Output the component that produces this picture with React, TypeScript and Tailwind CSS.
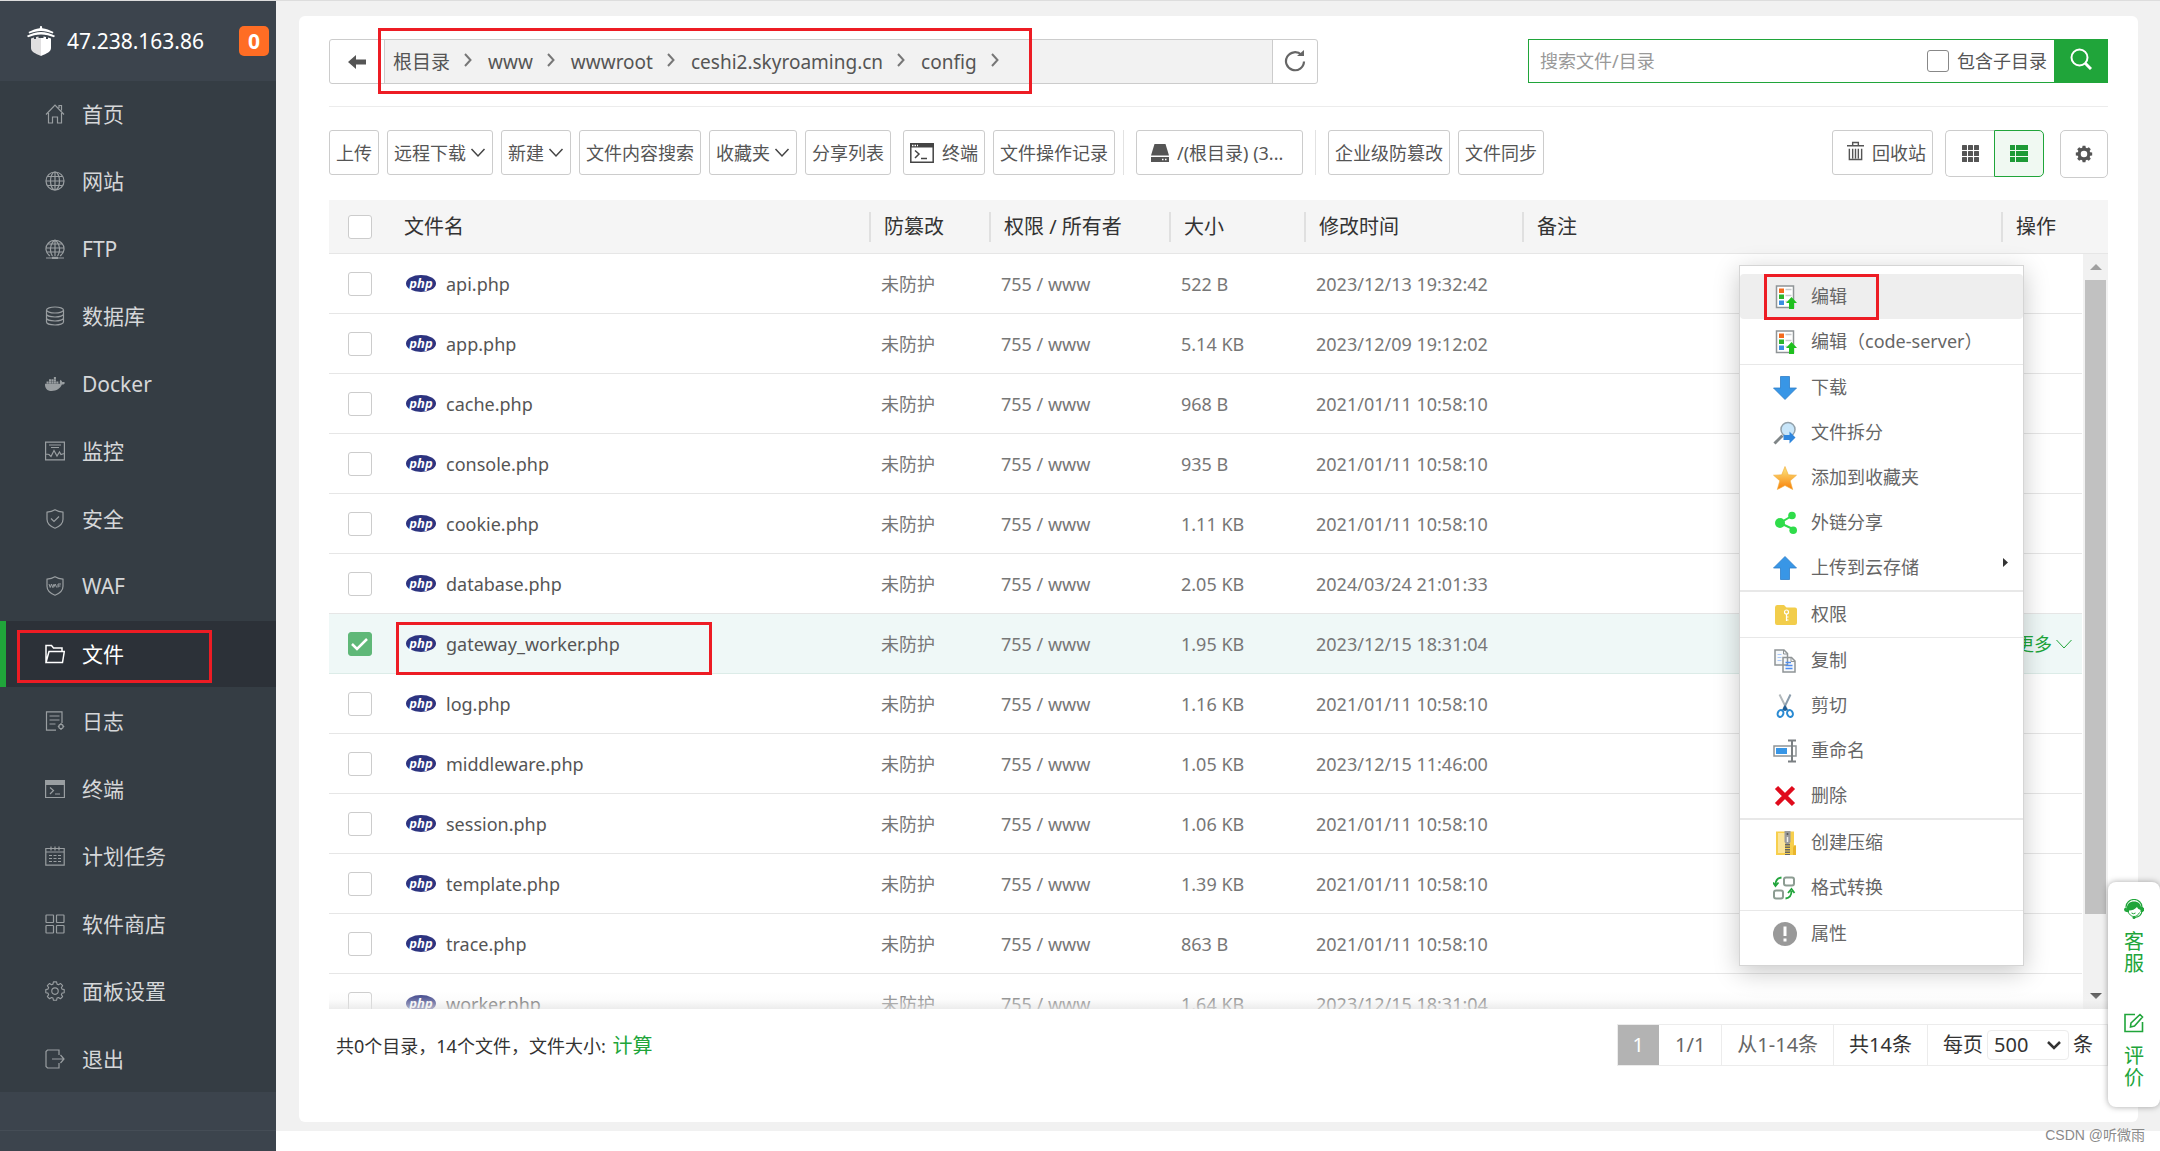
import type { ReactNode } from "react";
import clsx from "clsx";
import { FaDocker } from "react-icons/fa";

const Line = ({ children, className }: { children: ReactNode; className?: string }) => (
  <svg viewBox="0 0 20 20" fill="none" stroke="currentColor" strokeWidth="1.2" className={clsx("size-5 shrink-0", className)}>
    {children}
  </svg>
);

const shield = "M10 .8c2.600 1.600 5 2.200 8 2.400v7c0 4-3 7-8 9-5-2-8-5-8-9v-7c3-.2 5.400-.8 8-2.400z";
const gearPath =
  "M8.300 1h3.400l.5 2.400 1.600.7 2.100-1.400 2.400 2.400-1.400 2.100.7 1.600 2.400.5v3.400l-2.400.5-.7 1.600 1.400 2.100-2.400 2.400-2.100-1.400-1.600.7-.5 2.400H8.300l-.5-2.400-1.600-.7-2.100 1.400-2.400-2.400 1.400-2.100-.7-1.600L0 12.700V9.300l2.400-.5.700-1.600-1.400-2.100 2.400-2.400 2.100 1.400 1.600-.7z";

const nav: { label: string; icon: ReactNode; active?: boolean }[] = [
  { label: "首页", icon: <Line><path d="M1 10.500 10 1l9 9.500M14 4V1.500h2.500v5M3.500 9v10h4v-6h5v6h4V9" /></Line> },
  { label: "网站", icon: <Line><circle cx="10" cy="10" r="9" /><ellipse cx="10" cy="10" rx="4.500" ry="9" /><path d="M10 1v18M1 10h18M2.500 5.500h15M2.500 14.500h15" /></Line> },
  { label: "FTP", icon: <Line><path d="M5 17a9 8.600 0 1 1 10 0M7.500 17c-3-4-3-12 2.500-16 5.500 4 5.500 12 2.500 16M10 1v16M1 9h18M2.500 5h15M2 13h16M1 19h18" /><path d="M7 19h6" strokeWidth="2.500" /></Line> },
  { label: "数据库", icon: <Line><ellipse cx="10" cy="4" rx="8.500" ry="3" /><path d="M1.500 4v12c0 1.700 3.800 3 8.500 3s8.500-1.300 8.500-3V4M1.500 8c0 1.700 3.800 3 8.500 3s8.500-1.300 8.500-3M1.500 12c0 1.700 3.800 3 8.500 3s8.500-1.300 8.500-3" /></Line> },
  { label: "Docker", icon: <FaDocker className="size-5 shrink-0" /> },
  { label: "监控", icon: <Line><path d="M.6 1.200h18.800v17.600H.6zM4 4h12M6 6.500h8M1 13l3 .5 2 2 3-6 3 5.500 2.500-4 1.500 2.500 3-1" /></Line> },
  { label: "安全", icon: <Line><path d={shield} /><path d="m6 9.500 3 3 5-5" /></Line> },
  { label: "WAF", icon: <Line><path d={shield} /><path d="m4 8 1.200 3.500L6.500 8l1.200 3.500L9 8m-.3 3.500L10.200 8l1.500 3.500M13 11.500V8h3M13 10h2.500" strokeWidth="1" /></Line> },
  { label: "文件", icon: <Line className="text-white"><path d="M1 18.500V1.500h5.500l2 2.500H17v3.500M1 18.500 4 7.500h15.300L17.500 18.500z" strokeWidth="1.500" /></Line>, active: true },
  { label: "日志", icon: <Line><path d="M17 12V.8H1.500v18.400H11M4.500 5h10M4.500 9h10M4.500 13h6" /><circle cx="16" cy="15.500" r="2.200" /><path d="M16 12v1.500M16 17.500V19M12.800 15.500h1.500M17.800 15.500h1.500" /></Line> },
  { label: "终端", icon: <Line><path d="M.6 1.500h18.800v17H.6z" /><path d="M.6 4h18.800" strokeWidth="4" /><path d="m5 8.500 3.500 3L5 15M10 15h5" /></Line> },
  { label: "计划任务", icon: <Line><path d="M.8 2.500h18.400v16.700H.8zM.8 6h18.400M6 .5v4M10 .5v4M14 .5v4M4 9.500h3M8.500 9.500h3M13 9.500h3M4 12.500h3M8.500 12.500h3M13 12.500h3M4 15.500h3M8.500 15.500h3M13 15.500h3" /></Line> },
  { label: "软件商店", icon: <Line><rect x="1" y="1" width="7.500" height="7.500" rx=".5" /><rect x="11.500" y="1" width="7.500" height="7.500" rx=".5" /><rect x="1" y="11.500" width="7.500" height="7.500" rx=".5" /><rect x="11.500" y="11.500" width="7.500" height="7.500" rx=".5" /></Line> },
  { label: "面板设置", icon: <Line><g transform="translate(.8 0) scale(.92)"><path d={gearPath} strokeLinejoin="round" /><circle cx="10" cy="11" r="3.500" /></g></Line> },
  { label: "退出", icon: <Line><path d="M14 6V1H2.500L1 2.500V17.500L2.500 19H14v-5M7 10h12M15.500 6l3.500 4-3.500 4" /></Line> },
];

const crumbs = ["根目录", "www", "wwwroot", "ceshi2.skyroaming.cn", "config"];

const files = [
  { name: "api.php", size: "522 B", time: "2023/12/13 19:32:42" },
  { name: "app.php", size: "5.14 KB", time: "2023/12/09 19:12:02" },
  { name: "cache.php", size: "968 B", time: "2021/01/11 10:58:10" },
  { name: "console.php", size: "935 B", time: "2021/01/11 10:58:10" },
  { name: "cookie.php", size: "1.11 KB", time: "2021/01/11 10:58:10" },
  { name: "database.php", size: "2.05 KB", time: "2024/03/24 21:01:33" },
  { name: "gateway_worker.php", size: "1.95 KB", time: "2023/12/15 18:31:04", selected: true },
  { name: "log.php", size: "1.16 KB", time: "2021/01/11 10:58:10" },
  { name: "middleware.php", size: "1.05 KB", time: "2023/12/15 11:46:00" },
  { name: "session.php", size: "1.06 KB", time: "2021/01/11 10:58:10" },
  { name: "template.php", size: "1.39 KB", time: "2021/01/11 10:58:10" },
  { name: "trace.php", size: "863 B", time: "2021/01/11 10:58:10" },
  { name: "worker.php", size: "1.64 KB", time: "2023/12/15 18:31:04" },
];

const Pic = ({ children }: { children: ReactNode }) => (
  <svg viewBox="0 0 24 24" fill="none" className="size-6 shrink-0">
    {children}
  </svg>
);

const EditIcon = () => (
  <Pic>
    <rect x="3.500" y="1" width="17" height="21.500" fill="#fff" stroke="#8f9496" strokeWidth="1.500" />
    <path d="M12.500 4.500h6M12.500 10.500h6M12.500 16.500h3" stroke="#c9cccd" strokeWidth="1.500" />
    <rect x="6" y="3.500" width="5" height="4.500" fill="#f36a1d" />
    <rect x="6" y="9.500" width="5" height="4.500" fill="#2bb52b" />
    <rect x="6" y="15.500" width="5" height="4.500" fill="#3b8ee0" />
    <path d="m18.500 12 5.500 6h-3v6h-5v-6h-3z" fill="#1fc01f" />
  </Pic>
);

const menu: { label: string; icon: ReactNode; hover?: boolean; sub?: boolean }[][] = [
  [
    { label: "编辑", icon: <EditIcon />, hover: true },
    { label: "编辑（code-server）", icon: <EditIcon /> },
  ],
  [
    { label: "下载", icon: <Pic><path d="M7.500.5h9V12h7L12 23.500.5 12h7z" fill="#3896e6" stroke="#2f7fc8" strokeWidth=".8" /></Pic> },
    {
      label: "文件拆分",
      icon: (
        <Pic>
          <path d="m1.500 22.500 8-8" stroke="#7f8587" strokeWidth="3" />
          <circle cx="15" cy="8.500" r="7" fill="#c8e6fa" stroke="#93a1aa" strokeWidth="1.500" />
          <path d="M10.500 14h6v-3.500l6 6-6 6V19h-6z" fill="#2f86dd" />
        </Pic>
      ),
    },
    {
      label: "添加到收藏夹",
      icon: (
        <Pic>
          <defs>
            <linearGradient id="star" x1="0" y1="0" x2="0" y2="1">
              <stop offset="0.200" stopColor="#fbd56a" />
              <stop offset="0.900" stopColor="#f98a14" />
            </linearGradient>
          </defs>
          <path d="m12 .5 3.300 8.300 8.200.4-6.300 5.600 2.500 8.700L12 19.500l-7.700 4 2.500-8.700L.5 9.200l8.200-.4z" fill="url(#star)" stroke="#f0ad3c" strokeWidth=".6" />
        </Pic>
      ),
    },
    {
      label: "外链分享",
      icon: (
        <Pic>
          <path d="M19.500 4.500 7 12l15 7" stroke="#2fdc4a" strokeWidth="2" />
          <g fill="#2fdc4a"><circle cx="7" cy="12" r="5" /><circle cx="19" cy="4.500" r="3.800" /><circle cx="20.200" cy="19.200" r="3.800" /></g>
        </Pic>
      ),
    },
    { label: "上传到云存储", icon: <Pic><path d="M7.500 23.500h9V12h7L12 .5.5 12h7z" fill="#3896e6" stroke="#2f7fc8" strokeWidth=".8" /></Pic>, sub: true },
  ],
  [
    {
      label: "权限",
      icon: (
        <Pic>
          <path d="M2 4.500Q2 2 4 2h7l2.500 2.500H22q2 0 2 2V20q0 2-2 2H4q-2 0-2-2z" fill="#f2cd4b" />
          <g stroke="#fff" strokeWidth="1.200"><circle cx="13.500" cy="9" r="2" /><path d="M13.500 11v7M13.500 14h2M13.500 17h2" /></g>
        </Pic>
      ),
    },
  ],
  [
    {
      label: "复制",
      icon: (
        <Pic>
          <path d="M2 1h9l3.500 3.500V16H2zM10 8.500h8.500L22 12v11H10z" fill="#f7f9fb" stroke="#8f9496" strokeWidth="1.500" />
          <path d="M4.500 5.500h4M4.500 8.500h4M4.500 11.500h4" stroke="#a9c8fa" />
          <path d="M12.500 13.500H18M12.500 16.500h7M12.500 19.500h7" stroke="#4d8df0" strokeWidth="1.500" />
          <path d="M10.500 1v4h4M18 8.500v4h4" stroke="#8f9496" />
        </Pic>
      ),
    },
    {
      label: "剪切",
      icon: (
        <Pic>
          <path d="M6.500.5 14 15.500" stroke="#b4babd" strokeWidth="2" />
          <path d="M17.500.5 10.500 15" stroke="#8a9cab" strokeWidth="2" />
          <path d="m12 11-3 5 3 1 3-1z" fill="#1d5c96" />
          <ellipse cx="7.500" cy="19.500" rx="2.800" ry="3.500" transform="rotate(20 7.500 19.500)" stroke="#2a8ad2" strokeWidth="2" />
          <ellipse cx="17" cy="19.500" rx="2.800" ry="3.500" transform="rotate(-20 17 19.500)" stroke="#2a8ad2" strokeWidth="2" />
        </Pic>
      ),
    },
    {
      label: "重命名",
      icon: (
        <Pic>
          <rect x="1" y="7" width="22" height="10" fill="#fff" stroke="#8f9496" strokeWidth="1.500" />
          <rect x="3" y="9" width="11" height="6" fill="#3896e6" />
          <path d="M15 1.500h8M15 22.500h8M19 1.500v21" stroke="#7a7f82" strokeWidth="2" />
        </Pic>
      ),
    },
    { label: "删除", icon: <Pic><path d="m3.500 3.500 17 17m0-17-17 17" stroke="#e00b1c" strokeWidth="4.500" /></Pic> },
  ],
  [
    {
      label: "创建压缩",
      icon: (
        <Pic>
          <path d="M3 .5h18v14h2V24H3z" fill="#f7cf4d" />
          <path d="M5 2h7v20H5z" fill="#fbe49a" />
          <path d="M21 14.500h2V24h-3v-7z" fill="#e9b52c" />
          <path d="M11.500 0h6v11l-1.500 2h-3l-1.500-2z" fill="#9b9b9b" />
          <circle cx="14.500" cy="3" r="1" fill="#555" />
          <path d="M14.500 6v5" stroke="#eee" strokeWidth="1.500" />
          <path d="M14.500 13v11" stroke="#666" strokeWidth="5" strokeDasharray="1.500 1" />
        </Pic>
      ),
    },
    {
      label: "格式转换",
      icon: (
        <Pic>
          <g transform="translate(-1.500 0)">
            <g stroke="#8c9c92" strokeWidth="2"><rect x="12.500" y="1.500" width="10" height="8" rx="2" /><rect x="2.500" y="14.500" width="9" height="8" rx="2" /></g>
            <path d="M10 1.500C6 2 4 5 4 9M1.500 6.500 4 10l3-3.500M14 22.500c4-.5 6-3.500 6-7.500M16.500 17l3.500-4 3 4" stroke="#22a53c" strokeWidth="1.800" />
          </g>
        </Pic>
      ),
    },
  ],
  [{ label: "属性", icon: <Pic><circle cx="12" cy="12" r="12" fill="#999" /><path d="M12 4.500v9.500M12 16.500v3" stroke="#fff" strokeWidth="3" /></Pic> }],
];

const Mark = ({ className }: { className: string }) => (
  <span className={clsx("pointer-events-none absolute border-3 border-[#ed1c24]", className)} />
);

const Check = ({ label, checked }: { label: string; checked?: boolean }) => (
  <span className="grid size-6">
    <input
      type="checkbox"
      aria-label={label}
      defaultChecked={checked}
      className="peer col-start-1 row-start-1 size-6 appearance-none rounded-[3px] border border-[#ccc] bg-white checked:border-[#5fb878] checked:bg-[#5fb878]"
    />
    <svg viewBox="0 0 24 24" className="pointer-events-none invisible col-start-1 row-start-1 size-6 peer-checked:visible">
      <path d="m4 12 5 5 10-10" fill="none" stroke="#fff" strokeWidth="2.500" />
    </svg>
  </span>
);

const Tool = ({ children, className }: { children: ReactNode; className?: string }) => (
  <button type="button" className={clsx("flex h-[45px] shrink-0 items-center rounded-[3px] border border-[#ccc] bg-white px-1.5 whitespace-nowrap", className)}>
    {children}
  </button>
);

const Down = () => (
  <svg viewBox="0 0 16 10" className="ml-1 h-2.5 w-4" fill="none" stroke="#444" strokeWidth="1.500">
    <path d="m1.500 1 6.500 7 6.500-7" />
  </svg>
);

const Cols = ({ last }: { last: string }) => (
  <colgroup>
    <col className="w-[60px]" />
    <col className="w-[480px]" />
    <col className="w-[120px]" />
    <col className="w-[180px]" />
    <col className="w-[135px]" />
    <col className="w-[218px]" />
    <col />
    <col className={last} />
  </colgroup>
);

const Sidebar = () => (
  <aside className="w-[276px] shrink-0 bg-[#3c444d] text-[#d5d7d9]">
    <div className="flex h-20 items-center pr-[7px] pl-[27px] text-[21px] text-white">
      <svg viewBox="0 0 28 30" className="mr-3 h-[30px] w-7 shrink-0">
        <path d="M13.300 0h1.400l.6 2.200C19 2.800 22.500 4 26.500 6l-.8 1.600C21.500 6 18 5 14 5S6.500 6 2.300 7.600L1.500 6c4-2 7.500-3.200 11.200-3.800z" fill="#fff" />
        <path d="M14 6c4.500 0 9.500 1.500 14 3.800l-1 1.400c-4-1.500-8.500-2.800-13-2.800S5 9.700 1 11.200L0 9.800C4.500 7.500 9.500 6 14 6z" fill="#fff" />
        <path d="M4 12.500l3-1V13h2v-2l2.500-.5v1.500H14v18C8 27.500 4 25.500 4 22z" fill="#e0dfe0" />
        <path d="M24 12.500l-3-1V13h-2v-2l-2.500-.5v1.500H14v18c6-2.500 10-4.500 10-8z" fill="#fff" />
      </svg>
      <span>47.238.163.86</span>
      <span className="ml-auto grid h-[30px] w-[30px] place-items-center rounded-[5px] bg-[#ff6d24] font-bold">0</span>
    </div>
    <nav className="bg-[#353d44] text-[21px]">
      <ul>
        {nav.map((n) => (
          <li key={n.label} className="odd:mb-px even:mb-0.5">
            <a
              href="#"
              className={clsx(
                "relative flex h-[66px] items-center gap-4 border-l-6 pl-[39px]",
                n.active ? "border-[#20a53a] bg-[#2c3138] text-white" : "border-transparent"
              )}
            >
              <span className="text-[#999ea1]">{n.icon}</span>
              <span className="pl-px">{n.label}</span>
              {n.active && <Mark className="top-[9px] left-[11px] h-[53px] w-[195px]" />}
            </a>
          </li>
        ))}
      </ul>
    </nav>
    <div className="h-[38px] border-b border-[#454d56]" />
  </aside>
);

const PathBar = () => (
  <div className="flex items-start justify-between">
    <div className="relative flex h-[45px] w-[989px] rounded-[3px] border border-[#ccc]">
      <button type="button" aria-label="返回" className="grid w-[55px] place-items-center border-r border-[#ccc]">
        <svg viewBox="0 0 18 14" className="h-3.5 w-[18px]" fill="#555"><path d="M0 7l8-7v4.500h10v5H8V14z" /></svg>
      </button>
      <ol className="flex grow items-center bg-[#f2f2f2] pl-2 text-[19px]">
        {crumbs.map((c) => (
          <li key={c} className="flex items-center">
            <a href="#">{c}</a>
            <svg viewBox="0 0 8 14" className="mr-4 mb-1 ml-3.5 h-3.5 w-2" fill="none" stroke="#777" strokeWidth="2"><path d="m1 1 5.500 6L1 13" /></svg>
          </li>
        ))}
      </ol>
      <button type="button" aria-label="刷新" className="grid w-[45px] place-items-center border-l border-[#ccc]">
        <svg viewBox="0 0 22 24" className="mb-0.5 h-6 w-[22px]" fill="none" stroke="#666" strokeWidth="2.200">
          <path d="M17.500 6A9 9 0 1 0 20 12.500" />
          <path d="M13 7h7V1z" fill="#666" stroke="none" />
        </svg>
      </button>
      <Mark className="-top-3 left-12 h-[66px] w-[654px]" />
    </div>
    <form className="flex h-11 w-[580px]">
      <div className="flex grow items-center border border-r-0 border-[#20a53a] pr-[7px] pl-[11px]">
        <input type="text" aria-label="搜索文件/目录" placeholder="搜索文件/目录" className="min-w-0 grow outline-none placeholder:text-[#999]" />
        <input id="subdir" type="checkbox" className="mr-2 size-[22px] appearance-none rounded-[3px] border border-[#888] bg-white" />
        <label htmlFor="subdir">包含子目录</label>
      </div>
      <button type="button" aria-label="搜索" className="grid w-[54px] place-items-center bg-[#20a53a]">
        <svg viewBox="0 0 22 22" className="mb-1 size-[22px]" fill="none" stroke="#fff" strokeWidth="2"><circle cx="9.500" cy="9.500" r="8" /><path d="m15 15 6 6" strokeWidth="3" /></svg>
      </button>
    </form>
  </div>
);

const Toolbar = () => (
  <div className="flex items-start gap-2">
    <Tool>上传</Tool>
    <Tool>远程下载<Down /></Tool>
    <Tool>新建<Down /></Tool>
    <Tool>文件内容搜索</Tool>
    <Tool>收藏夹<Down /></Tool>
    <Tool>分享列表</Tool>
    <Tool className="ml-1">
      <svg viewBox="0 0 24 20" className="mr-2 h-5 w-6" fill="none" stroke="#444" strokeWidth="1.500">
        <path d="M.8.800h22.400v18.400H.8z" />
        <path d="M0 2.500h24" strokeWidth="4" />
        <path d="M2 2.500h6" stroke="#fff" strokeDasharray="1.500 1" />
        <path d="m5 7.500 4 3.500-4 4M11 15.500h6" />
      </svg>
      终端
    </Tool>
    <Tool>文件操作记录</Tool>
    <span className="h-[45px] w-px bg-[#e2e2e2]" />
    <Tool className="ml-1 w-[167px] px-3.5">
      <svg viewBox="0 0 18 18" className="mr-2 size-[18px] shrink-0" fill="#555">
        <path d="M3.500 0h11L18 11.500H0zM0 13h18v5H0z" />
        <path d="M11 15.500h1.500M14 15.500h1.500" stroke="#fff" strokeWidth="1.500" />
      </svg>
      /(根目录) (3...
    </Tool>
    <span className="ml-1 h-[45px] w-px bg-[#e2e2e2]" />
    <Tool className="ml-1">企业级防篡改</Tool>
    <Tool>文件同步</Tool>
    <Tool className="mr-1 ml-auto pl-3.5">
      <svg viewBox="0 0 18 20" className="mr-2 mb-1 h-5 w-[17px]" fill="none" stroke="#555" strokeWidth="1.500">
        <path d="M0 4.500h18M6 4V1h6v3M2.500 7.500v11.500h13V7.500M6 7.500V18M9 7.500V18M12 7.500V18" />
      </svg>
      回收站
    </Tool>
    <div className="mr-2 flex h-[47px]">
      <button type="button" aria-label="图标视图" className="grid w-[49px] place-items-center rounded-l-[5px] border border-r-0 border-[#ccc]">
        <svg viewBox="0 0 17 17" className="size-[17px]" fill="#555">
          {[0, 6, 12].map((y) => [0, 6, 12].map((x) => <rect key={`${x}-${y}`} x={x} y={y} width="5" height="5" rx=".5" />))}
        </svg>
      </button>
      <button type="button" aria-label="列表视图" className="grid w-[50px] place-items-center rounded-r-[5px] border border-[#20a53a] bg-[#f0f9f2]">
        <svg viewBox="0 0 18 17" className="h-[17px] w-[18px]" fill="#1d9a36">
          {[0, 6, 12].map((y) => <path key={y} d={`M0 ${y}h5v5H0zM6 ${y}h12v5H6z`} />)}
        </svg>
      </button>
    </div>
    <button type="button" aria-label="设置" className="grid h-12 w-12 place-items-center rounded-[5px] border border-[#ccc]">
      <svg viewBox="0 0 20 22" className="h-[18px] w-[18px]">
        <path fillRule="evenodd" d={`${gearPath}M10 7a4 4 0 1 0 0 8a4 4 0 1 0 0-8z`} fill="#555" />
      </svg>
    </button>
  </div>
);

const ContextMenu = () => (
  <div className="absolute top-[65px] right-[84px] w-[285px] border border-[#d5d5d5] bg-white pt-2 pb-[9px] text-[#666] shadow-[0_6px_24px_rgba(0,0,0,0.22)]">
    {menu.map((group, i) => (
      <ul key={i} className="border-[#e8e8e8] not-last:odd:border-b not-last:even:border-b-2">
        {group.map((m) => (
          <li key={m.label}>
            <button type="button" className={clsx("relative flex h-[45px] w-full items-center gap-3.5 rounded pl-[33px]", m.hover && "bg-[#eee]")}>
              {m.icon}
              <span className="pb-0.5">{m.label}</span>
              {m.sub && <svg viewBox="0 0 5 9" className="mr-[15px] mb-2.5 ml-auto h-[9px] w-[5px]" fill="#333"><path d="M0 0l5 4.500L0 9z" /></svg>}
              {m.hover && <Mark className="top-0 left-6 h-[46px] w-[115px]" />}
            </button>
          </li>
        ))}
      </ul>
    ))}
  </div>
);

const FileTable = () => (
  <div className="relative">
    <table className="w-full table-fixed border-separate border-spacing-0 bg-[#f5f5f5] text-left text-[20px] text-[#333]">
      <Cols last="w-[107px]" />
      <thead>
        <tr className="h-[54px]">
          <th className="border-b border-[#e6e6e6] p-0 pl-[19px] font-normal"><Check label="全选" /></th>
          {["文件名", "防篡改", "权限 / 所有者", "大小", "修改时间", "备注", "操作"].map((h, i) => (
            <th key={h} className="border-b border-[#e6e6e6] p-0 font-normal">
              <div className={clsx("flex h-[30px] items-center", i ? "border-l-2 border-[#e0e0e0] pl-[13px]" : "pl-[15px]")}>{h}</div>
            </th>
          ))}
        </tr>
      </thead>
    </table>
    <div className="flex h-[755px] overflow-hidden">
      <div className="mr-px grow">
        <table className="w-full table-fixed border-separate border-spacing-0 text-left text-[#777]">
          <Cols last="w-[81px]" />
          <tbody>
            {files.map((f) => {
              const td = clsx("h-[60px] border-b p-0", f.selected ? "border-[#dcece8] bg-[#eff8f7]" : "border-[#e6e6e6]");
              return (
                <tr key={f.name}>
                  <td className={clsx(td, "pl-[19px]")}><Check label={f.name} checked={f.selected} /></td>
                  <td className={clsx(td, "relative pl-[17px]")}>
                    <a href="#" className="flex items-center gap-2.5 text-[#555]">
                      <span className="grid h-[17px] w-[30px] place-items-center rounded-[50%] bg-[#2d3480] text-[13px] leading-[13px] font-bold text-white italic">php</span>
                      {f.name}
                    </a>
                    {f.selected && <Mark className="top-2 left-[7px] h-[53px] w-[316px]" />}
                  </td>
                  <td className={clsx(td, "pl-3")}>未防护</td>
                  <td className={clsx(td, "pl-3")}>755 / www</td>
                  <td className={clsx(td, "pl-3")}>{f.size}</td>
                  <td className={clsx(td, "pl-3")}>{f.time}</td>
                  <td className={td} />
                  <td className={clsx(td, "pl-[15px]")}>
                    {f.selected && (
                      <a href="#" className="flex items-center text-[#20a53a]">
                        更多
                        <svg viewBox="0 0 16 10" className="ml-1 h-2.5 w-4" fill="none" stroke="currentColor"><path d="m.5 1 7.500 8 7.500-8" /></svg>
                      </a>
                    )}
                  </td>
                </tr>
              );
            })}
          </tbody>
        </table>
      </div>
      <div className="flex w-[25px] shrink-0 flex-col items-center justify-between bg-[#f1f1f1] pb-2.5">
        <div className="flex flex-col items-center">
          <svg viewBox="0 0 12 6" className="my-2.5 h-1.5 w-3" fill="#a0a0a0"><path d="M0 6l6-6 6 6z" /></svg>
          <div className="h-[634px] w-[21px] bg-[#c1c1c1]" />
        </div>
        <svg viewBox="0 0 12 6" className="h-1.5 w-3" fill="#505050"><path d="M0 0l6 6 6-6z" /></svg>
      </div>
    </div>
    <div className="pointer-events-none absolute inset-x-0 bottom-0 h-[18px] bg-linear-to-b from-white/0 via-[#f4f4f4]/30 to-[#e4e4e4]/70" />
    <ContextMenu />
  </div>
);

const Footer = () => (
  <div className="mt-[15px] flex items-center justify-between text-[#333]">
    <p className="pt-0.5 pl-[7px]">
      共0个目录，14个文件，文件大小: <a href="#" className="ml-0.5 text-[20px] text-[#20a53a]">计算</a>
    </p>
    <div className="flex h-[42px] items-center border border-[#ececec] text-[20px] [&>*]:flex [&>*]:h-full [&>*]:items-center">
      <span className="-my-px box-content bg-[#b3b3b3] px-[15px] text-white">1</span>
      <span className="border-r border-[#ececec] px-4 text-[#666]">1/1</span>
      <span className="border-r border-[#ececec] px-[15px] text-[#666]">从1-14条</span>
      <span className="border-r border-[#ececec] px-[15px]">共14条</span>
      <label className="gap-1 pr-3.5 pl-[15px]">
        每页
        <span className="grid items-center">
          <select className="col-start-1 row-start-1 h-[30px] w-[82px] appearance-none rounded border border-[#ececec] bg-white pl-1.5">
            <option>500</option>
          </select>
          <svg viewBox="0 0 14 9" className="pointer-events-none col-start-1 row-start-1 mr-2 h-[9px] w-3.5 justify-self-end" fill="none" stroke="#333" strokeWidth="2.500"><path d="m1 1 6 6 6-6" /></svg>
        </span>
        条
      </label>
    </div>
  </div>
);

const SideFloat = () => (
  <div className="absolute right-0 bottom-11 flex h-[225px] w-[52px] flex-col items-center justify-between rounded-lg bg-white pt-[17px] pb-[18px] text-[20px] leading-[22px] text-[#20a53a] shadow-[0_0_6px_rgba(0,0,0,0.35)]">
    <a href="#" className="flex flex-col items-center gap-3">
      <svg viewBox="0 0 20 20" className="size-5" fill="none" stroke="currentColor">
        <path d="M2 8a8 7.500 0 0 1 16 0M18 12a8 7.500 0 0 1-7 6.500" strokeWidth="1.200" />
        <path d="M3 11C2 5 6 2.500 10 2.500S18 5 17 11c-2-.5-3.500-1.500-4-3-2 2.500-5 3.500-8 3.500L5 13H2.500Q0 12.500 0 10.500T2.500 8" fill="currentColor" stroke="none" />
        <path d="M17 8q3 .5 3 2.500T17 13z" fill="currentColor" />
        <path d="M4 13c2 3.500 4 4.500 6 4.500s4-1 5.500-4M7.500 14q2 1.500 4 0" />
        <circle cx="10" cy="18.500" r="1.500" fill="currentColor" stroke="none" />
      </svg>
      <span className="w-5">客服</span>
    </a>
    <a href="#" className="flex flex-col items-center gap-3">
      <svg viewBox="0 0 20 20" className="size-5" fill="none" stroke="currentColor" strokeWidth="1.600">
        <path d="M11 1.500H1v17h17.500V9M7 10l9-8.500 2.500 2.500-8 9L6.500 14z" />
      </svg>
      <span className="w-5">评价</span>
    </a>
  </div>
);

export default function App() {
  return (
    <div className="relative flex min-h-screen border-t border-[#ddd] bg-white font-['Noto_Sans','Noto_Sans_CJK_SC',sans-serif] text-[18px] leading-6 text-[#555]">
      <Sidebar />
      <div className="min-w-0 grow">
        <main className="bg-[#f1f1f1] pt-[15px] pr-[22px] pb-[9px] pl-[23px]">
          <div className="rounded-[6px] bg-white px-[30px] pt-[23px] pb-14">
            <PathBar />
            <div className="mt-[22px] mb-[23px] h-px bg-[#ececec]" />
            <Toolbar />
            <div className="h-[22px]" />
            <FileTable />
            <Footer />
          </div>
        </main>
      </div>
      <SideFloat />
      <span className="absolute right-[15px] bottom-1 font-['Liberation_Sans','Noto_Sans_CJK_SC',sans-serif] text-[14px] text-[#8a8a8a]">CSDN @听微雨</span>
    </div>
  );
}
